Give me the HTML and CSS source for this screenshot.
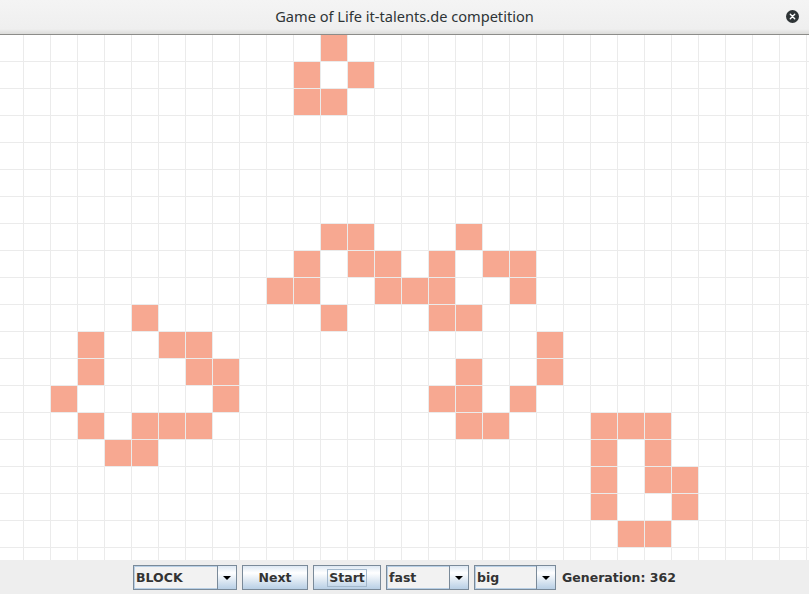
FILE: index.html
```html
<!DOCTYPE html>
<html lang="en">
<head>
<meta charset="utf-8">
<title>Game of Life it-talents.de competition</title>
<link rel="stylesheet" href="styles.css">
</head>
<body>
<div class="window">
  <header class="titlebar">
    <span class="title">Game of Life it-talents.de competition</span>
    <span class="close" aria-label="Close">
      <svg width="13" height="13" viewBox="0 0 13 13"><circle cx="6.5" cy="6.5" r="6.5" fill="#2e3436"/><path d="M4.3 4.3 L8.7 8.7 M8.7 4.3 L4.3 8.7" stroke="#fff" stroke-width="1.4" stroke-linecap="round"/></svg>
    </span>
  </header>
  <main class="board">
    <div class="cell" style="grid-area:1/13"></div>
    <div class="cell" style="grid-area:2/12"></div>
    <div class="cell" style="grid-area:2/14"></div>
    <div class="cell" style="grid-area:3/12"></div>
    <div class="cell" style="grid-area:3/13"></div>

    <div class="cell" style="grid-area:8/13"></div>
    <div class="cell" style="grid-area:8/14"></div>
    <div class="cell" style="grid-area:8/18"></div>

    <div class="cell" style="grid-area:9/12"></div>
    <div class="cell" style="grid-area:9/14"></div>
    <div class="cell" style="grid-area:9/15"></div>
    <div class="cell" style="grid-area:9/17"></div>
    <div class="cell" style="grid-area:9/19"></div>
    <div class="cell" style="grid-area:9/20"></div>

    <div class="cell" style="grid-area:10/11"></div>
    <div class="cell" style="grid-area:10/12"></div>
    <div class="cell" style="grid-area:10/15"></div>
    <div class="cell" style="grid-area:10/16"></div>
    <div class="cell" style="grid-area:10/17"></div>
    <div class="cell" style="grid-area:10/20"></div>

    <div class="cell" style="grid-area:11/6"></div>
    <div class="cell" style="grid-area:11/13"></div>
    <div class="cell" style="grid-area:11/17"></div>
    <div class="cell" style="grid-area:11/18"></div>

    <div class="cell" style="grid-area:12/4"></div>
    <div class="cell" style="grid-area:12/7"></div>
    <div class="cell" style="grid-area:12/8"></div>
    <div class="cell" style="grid-area:12/21"></div>

    <div class="cell" style="grid-area:13/4"></div>
    <div class="cell" style="grid-area:13/8"></div>
    <div class="cell" style="grid-area:13/9"></div>
    <div class="cell" style="grid-area:13/18"></div>
    <div class="cell" style="grid-area:13/21"></div>

    <div class="cell" style="grid-area:14/3"></div>
    <div class="cell" style="grid-area:14/9"></div>
    <div class="cell" style="grid-area:14/17"></div>
    <div class="cell" style="grid-area:14/18"></div>
    <div class="cell" style="grid-area:14/20"></div>

    <div class="cell" style="grid-area:15/4"></div>
    <div class="cell" style="grid-area:15/6"></div>
    <div class="cell" style="grid-area:15/7"></div>
    <div class="cell" style="grid-area:15/8"></div>
    <div class="cell" style="grid-area:15/18"></div>
    <div class="cell" style="grid-area:15/19"></div>
    <div class="cell" style="grid-area:15/23"></div>
    <div class="cell" style="grid-area:15/24"></div>
    <div class="cell" style="grid-area:15/25"></div>

    <div class="cell" style="grid-area:16/5"></div>
    <div class="cell" style="grid-area:16/6"></div>
    <div class="cell" style="grid-area:16/23"></div>
    <div class="cell" style="grid-area:16/25"></div>

    <div class="cell" style="grid-area:17/23"></div>
    <div class="cell" style="grid-area:17/25"></div>
    <div class="cell" style="grid-area:17/26"></div>

    <div class="cell" style="grid-area:18/23"></div>
    <div class="cell" style="grid-area:18/26"></div>

    <div class="cell" style="grid-area:19/24"></div>
    <div class="cell" style="grid-area:19/25"></div>
  </main>
  <footer class="controls">
    <div class="combo combo-pattern"><span class="combo-value">BLOCK</span><span class="combo-arrow"><span class="arrow"></span></span></div>
    <button class="btn btn-next">Next</button>
    <button class="btn btn-start"><span class="focus">Start</span></button>
    <div class="combo combo-speed"><span class="combo-value">fast</span><span class="combo-arrow"><span class="arrow"></span></span></div>
    <div class="combo combo-size"><span class="combo-value">big</span><span class="combo-arrow"><span class="arrow"></span></span></div>
    <span class="generation">Generation: 362</span>
  </footer>
</div>
</body>
</html>
```
FILE: styles.css
```css
* { box-sizing: border-box; }
html, body { margin: 0; padding: 0; }
body {
  width: 809px;
  height: 594px;
  overflow: hidden;
  background: #eeeeee;
  font-family: "DejaVu Sans", sans-serif;
}
.window {
  display: flex;
  flex-direction: column;
  width: 809px;
  height: 594px;
}
.titlebar {
  height: 35px;
  flex: none;
  display: grid;
  grid-template-columns: 1fr auto 1fr;
  align-items: center;
  background: linear-gradient(#f4f4f4, #efefef 85%, #dcdcda);
  border-bottom: 1px solid #8c8c89;
}
.title {
  grid-column: 2;
  font-family: "Noto Sans", sans-serif;
  font-size: 14.6px;
  color: #2e3436;
  padding-bottom: 2px;
}
.close {
  grid-column: 3;
  justify-self: end;
  margin-right: 10px;
  display: flex;
  padding-bottom: 2px;
}
.board {
  height: 525px;
  flex: none;
  overflow: hidden;
  display: grid;
  grid-template-columns: 23px repeat(30, 26px);
  grid-template-rows: repeat(20, 26px);
  gap: 1px;
  background-color: #ffffff;
  background-image:
    linear-gradient(to right, #ebebeb 1px, transparent 1px),
    linear-gradient(to bottom, #ebebeb 1px, transparent 1px);
  background-size: 27px 27px;
  background-position: 23px 0, 0 26px;
}
.cell {
  background: #f7a891;
}
.controls {
  flex: 1;
  display: flex;
  justify-content: center;
  align-items: flex-start;
  gap: 5px;
  padding-top: 5px;
  background: #eeeeee;
  font-weight: bold;
  font-size: 12.5px;
  color: #333333;
}
.combo {
  height: 25px;
  display: flex;
  border: 1px solid #7a8a99;
  background: #eeeeee;
}
.combo-pattern { width: 104px; }
.combo-speed { width: 83px; }
.combo-size { width: 82px; }
.combo-value {
  flex: 1;
  display: flex;
  align-items: center;
  padding-left: 1px;
  border: 1px solid #b8cfe5;
  border-right: none;
  background: #f2f2f2;
}
.combo-arrow {
  width: 19px;
  display: flex;
  align-items: center;
  justify-content: center;
  border-left: 1px solid #7a8a99;
  background: linear-gradient(#dde8f3, #ffffff 30%, #b8cfe5);
}
.arrow {
  width: 0;
  height: 0;
  border-left: 4px solid transparent;
  border-right: 4px solid transparent;
  border-top: 4px solid #000000;
}
.btn {
  height: 25px;
  padding: 0;
  border: 1px solid #7a8a99;
  background: linear-gradient(#dde8f3, #ffffff 30%, #b8cfe5);
  font: bold 12.5px "DejaVu Sans", sans-serif;
  color: #333333;
  display: flex;
  align-items: center;
  justify-content: center;
}
.btn-next { width: 66px; }
.btn-start { width: 68px; }
.focus {
  border: 1px solid #a3b8cc;
  padding: 1px 1px 1px 1px;
  line-height: 14px;
}
.generation {
  height: 25px;
  display: flex;
  align-items: center;
  padding-left: 1px;
}
```
